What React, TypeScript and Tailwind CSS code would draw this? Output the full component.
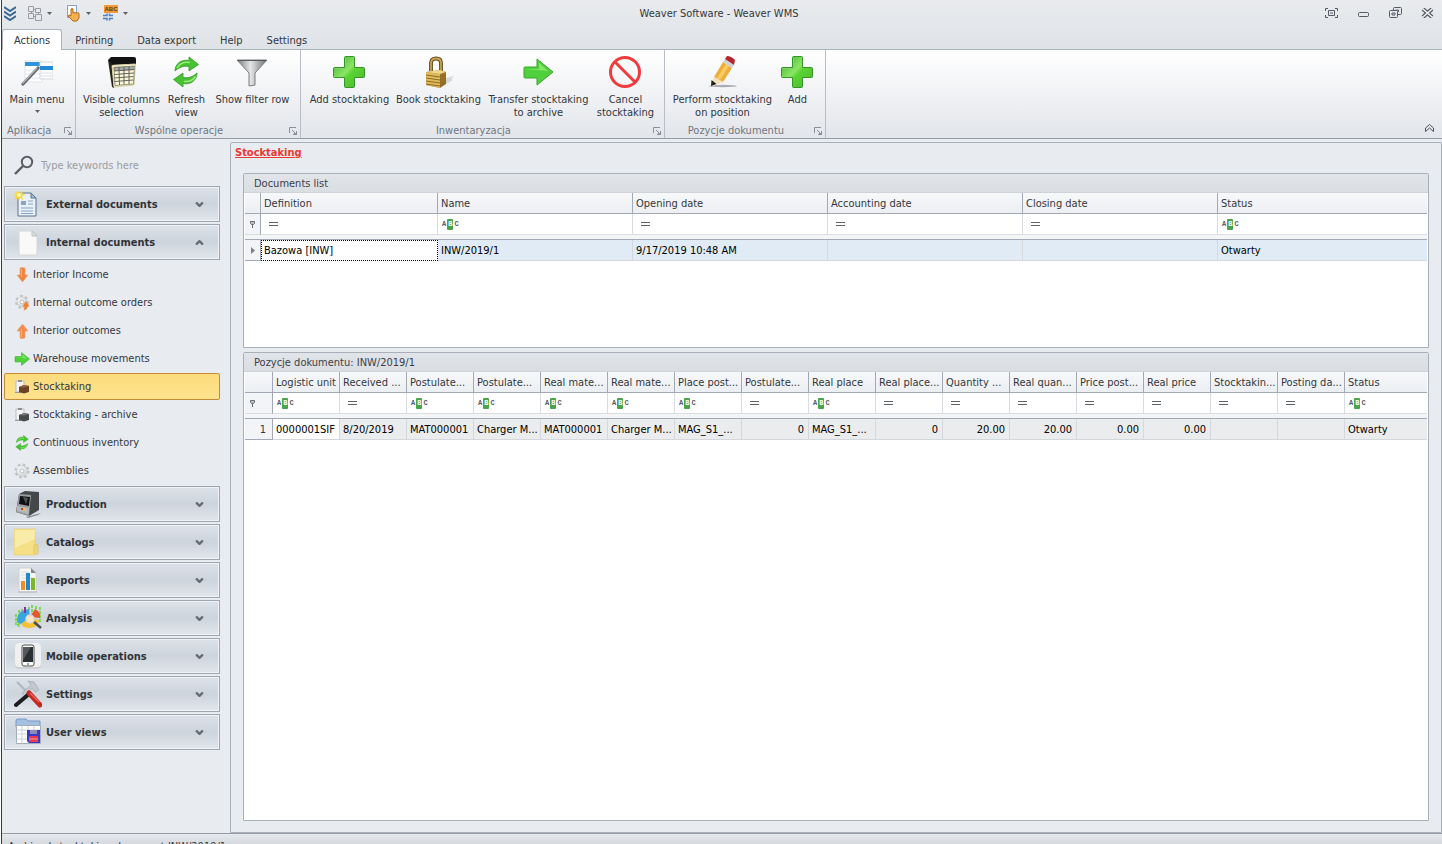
// Weaver WMS - stocktaking screen
import { useState, type ReactNode } from 'react';
import { ChevronDown, ChevronUp } from 'lucide-react';

interface RibbonAction {
    label: string[];
    width: string;
    icon: ReactNode;
    menu?: boolean;
}

interface RibbonGroupData {
    name: string;
    padding: string;
    actions: RibbonAction[];
}

interface Column {
    title: string;
    filter: 'abc' | 'eq';
    width?: string;
    right?: boolean;
}

/* ---------- Ribbon icons ---------- */

const MainMenuIcon = () => (
    <svg width="32" height="32" viewBox="0 0 32 32">
        <path d="M4 5h17v21H4z" fill="#fff" stroke="#dfe2e6" />
        <path d="M4 14h16M4 18h16M4 22h16" stroke="#e3e6ea" />
        <path d="M4 6h17v4H4z" fill="#2f93dc" />
        <path d="M19 6h13v17H19z" fill="#fbfcfd" stroke="#d5d9de" />
        <path d="M19 17h12M19 20h12" stroke="#dfe2e6" />
        <path d="M19 10h13v4H19z" fill="#2589d6" />
        <path d="M2 28 17 12" stroke="#63676c" strokeWidth="3.2" strokeLinecap="round" />
        <path d="M2 27 16 12" stroke="#b7bbbf" strokeWidth="1.2" strokeLinecap="round" />
    </svg>
);

const ColumnsIcon = () => (
    <svg width="32" height="32" viewBox="0 0 32 32">
        <path d="m3 4 3-3h23q2 0 2 2v5L6 9z" fill="#121212" />
        <path d="M3 4l4 4 2 24-2-1z" fill="#26261f" />
        <path d="M7 9.500 30.500 8l-1.500 21L9 31z" fill="#fbf8da" stroke="#d8d09a" />
        <path d="m8.500 11 20.500-1v4L9 15z" fill="#a9aaa7" />
        <path d="m9 15 20-1.500M9 18.500l20-1.500M9.500 22l19-1.500M9.500 25.500l19-1.500M14 11l.5 18M19 11v17.500M24 10.500V28" stroke="#55564e" strokeWidth=".9" fill="none" />
        <path d="M9 11.500 10 29.500l18.500-1.500L29.500 10z" stroke="#6a6a5c" strokeWidth=".7" fill="none" />
    </svg>
);

const RefreshIcon = ({ size = 32 }: { size?: number }) => (
    <svg width={size} height={size} viewBox="0 0 32 32">
        <path d="M5 15C5 8 11 3 19 4.500V1l9.500 7.500L19 15v-4.500c-6-1-10 1-14 4.500z" fill="#47c231" stroke="#36982a" strokeWidth=".8" />
        <path d="M27 17c0 7-6 12-14 10.500V31l-9.500-7.500L13 17v4.500c6 1 10-1 14-4.500z" fill="#47c231" stroke="#36982a" strokeWidth=".8" />
        <path d="M7 12c3-5 8-6.500 13-5.500M14 25.500c5 .5 9-1 11.500-5" fill="none" stroke="#9cec7d" strokeWidth="1.500" />
    </svg>
);

const FunnelIcon = () => (
    <svg width="32" height="32" viewBox="0 0 32 32">
        <defs>
            <linearGradient id="funnel" x1="0" x2="1">
                <stop offset="0" stopColor="#777b7c" />
                <stop offset=".45" stopColor="#e4e6e6" />
                <stop offset="1" stopColor="#6c7072" />
            </linearGradient>
        </defs>
        <path d="M1 4h30L19 17v12l-6 1V17z" fill="url(#funnel)" stroke="#7b7f81" />
        <path d="M2 4.500h28" stroke="#565a5c" />
    </svg>
);

const PlusIcon = () => (
    <svg width="32" height="32" viewBox="0 0 32 32">
        <defs>
            <linearGradient id="plus" x1="0" y1="0" x2="1" y2="1">
                <stop offset="0" stopColor="#3fae2a" />
                <stop offset=".45" stopColor="#8be566" />
                <stop offset=".55" stopColor="#58d433" />
                <stop offset="1" stopColor="#4bb532" />
            </linearGradient>
        </defs>
        <path
            d="M11.500 1.500q0-1 1-1h8q1 0 1 1v10h9q1 0 1 1v8q0 1-1 1h-9v9q0 1-1 1h-8q-1 0-1-1v-9h-10q-1 0-1-1v-8q0-1 1-1h10z"
            fill="url(#plus)"
            stroke="#35932a"
        />
        <path d="M12.500 2v10.500H2" fill="none" stroke="#7fd767" />
    </svg>
);

const LockIcon = () => (
    <svg width="32" height="32" viewBox="0 0 32 32">
        <path d="m24 22 8-2-3 3 2 1-7 4z" fill="#d4d7da" />
        <path d="M9 15V7q0-4.500 5-4.500T19 7v8" fill="none" stroke="#5e4718" strokeWidth="3.800" />
        <path d="M9 15V7q0-4.500 5-4.500T19 7v8" fill="none" stroke="#cba453" strokeWidth="1.800" />
        <path d="m4 16 14-2 6 2v12l-6 4-14-3z" fill="#9b7126" />
        <path d="m4 16 14 2v14L4 29z" fill="#e0ba5c" />
        <path d="m4 19 14 2 6-2M4 22l14 2 6-2M4 25l14 2 6-2M4 28l14 2 6-3" fill="none" stroke="#8d6c25" />
        <path d="m4 16 14-2 6 2-6 2z" fill="#f0d78b" />
    </svg>
);

const ArrowIcon = ({ size = 32 }: { size?: number }) => (
    <svg width={size} height={size} viewBox="0 0 32 32">
        <path d="M2 12q0-1 1-1h12V3l16 13-16 13v-7H3q-1 0-1-1z" fill="#50d03c" stroke="#38a52c" />
        <path d="M4 13h13V7l9 8z" fill="#7ee864" />
    </svg>
);

const CancelIcon = () => (
    <svg width="32" height="32" viewBox="0 0 32 32">
        <circle cx="16" cy="16" r="14.500" fill="none" stroke="#ef3b3b" strokeWidth="3" />
        <path d="m6 6 20 20" stroke="#ef3b3b" strokeWidth="3" />
    </svg>
);

const PencilIcon = () => (
    <svg width="32" height="32" viewBox="0 0 32 32">
        <ellipse cx="17" cy="30" rx="14" ry="1.200" fill="#a9adb2" />
        <path d="M8 21 17 6l9 6-9 14z" fill="#eeae3a" />
        <path d="M11 22 20 8l3 2-9 14z" fill="#f7cd63" />
        <path d="m17 6 2-3 9 6-2 3z" fill="#cfd2d6" />
        <path d="m19 3 2-3q4 0 8 4l-1 5z" fill="#b3272c" />
        <path d="m8 21 9 5-10 4-2-1z" fill="#f5dfb6" />
        <path d="m5.500 24 5 4-5.500 2z" fill="#20201f" />
    </svg>
);

/* ---------- Navigation icons ---------- */

const Gear = ({ cx, cy, r }: { cx: number; cy: number; r: number }) => (
    <g>
        <circle cx={cx} cy={cy} r={r} fill="none" stroke="#bfc2c5" strokeWidth="3" strokeDasharray="2.400 2.300" />
        <circle cx={cx} cy={cy} r={r - 0.5} fill="#d9dbdd" stroke="#c3c6c9" strokeWidth=".6" />
        <circle cx={cx - 1} cy={cy - 1} r={r - 2} fill="#ebecee" />
        <circle cx={cx} cy={cy} r="2" fill="#f8f9fa" stroke="#adb0b4" strokeWidth=".8" />
    </g>
);

const ArrowDownIcon = () => (
    <svg width="16" height="16" viewBox="0 0 16 16">
        <path d="M6 1q2-1 5 0v7h3l-5.500 7L3 8h3z" fill="#ef8440" stroke="#e9a276" strokeWidth=".6" />
        <path d="M7.500 2v8" stroke="#f9b486" />
    </svg>
);

const ArrowUpIcon = () => (
    <svg width="16" height="16" viewBox="0 0 16 16">
        <path d="M6 15q2 1 5 0V8h3L8.500 1 3 8h3z" fill="#f28a48" stroke="#e9a276" strokeWidth=".6" />
        <path d="M7.500 14V6" stroke="#f9b486" />
    </svg>
);

const OrdersIcon = () => (
    <svg width="16" height="16" viewBox="0 0 16 16">
        <Gear cx={8} cy={7} r={5.5} />
        <path d="M9.500 15.500q1-1 1-4H8.500L12 6l3.500 5.500h-2q0 3-4 4z" fill="#f08033" />
    </svg>
);

const GearIcon = () => (
    <svg width="16" height="16" viewBox="0 0 16 16">
        <Gear cx={8} cy={8} r={6} />
    </svg>
);

const StockIcon = ({ box, top }: { box: string; top: string }) => (
    <svg width="16" height="16" viewBox="0 0 16 16">
        <path d="M2 2h8v11H2z" fill="#f4f4f4" stroke="#b9bcc0" />
        <path d="M4 1h4v2H4z" fill="#8d9196" />
        <path d="M1 13.500h6" stroke="#999" />
        <path d="m5 8 5-2 5 1v6l-5 1.500L5 13z" fill={box} />
        <path d="m5 8 5-2 5 1-5 1.500z" fill={top} />
    </svg>
);

const SearchIcon = () => (
    <svg width="20" height="20" viewBox="0 0 20 20" fill="none" stroke="#5b5f64">
        <circle cx="13" cy="7" r="5.200" strokeWidth="2" />
        <path d="m9 11-8 8" strokeWidth="2.400" />
    </svg>
);

const ExternalDocIcon = () => (
    <svg width="28" height="28" viewBox="0 0 28 28">
        <path d="M4 3h13l5 5v18H4z" fill="#e9f0f8" stroke="#58728f" />
        <path d="M17 3v5h5z" fill="#a8bdd3" stroke="#58728f" />
        <path d="M7 11h5v4H7z" fill="#8aa4c3" />
        <path d="M14 11h5M14 14h5M7 18h12M7 21h12M7 23.500h12" stroke="#8aa4c3" />
        <path d="m5 0 1 3 3-2-1 3 4 1-4 1 1 4-3-2-1 3-1-3-3 2 1-4-3-1 3-1-1-3 3 2z" fill="#f8d936" />
        <circle cx="5" cy="5" r="2" fill="#fff8b0" />
    </svg>
);

const BlankDocIcon = () => (
    <svg width="28" height="28" viewBox="0 0 28 28">
        <path d="M5 3h14l4 5v19H5z" fill="#f8f9f8" stroke="#d5d8d8" />
        <path d="M18 3v5h5z" fill="#dfe2e2" stroke="#bcc0c1" />
    </svg>
);

const ProductionIcon = () => (
    <svg width="28" height="28" viewBox="0 0 28 28">
        <path d="M12 27 27 23l-3 2-10 3z" fill="#85898d" />
        <path d="M5 4 11 1l14 1v18l-10 6-13-4z" fill="#45484b" />
        <path d="m5 4 12 1-2 21-13-4z" fill="#9a9da0" />
        <path d="m6 6 10 1-1 9-10-2z" fill="#101112" />
        <path d="m9 7 5 1-2 6z" fill="#4d5155" />
        <path d="m3 16 12 2-1 6-11-3z" fill="#b6b9bb" />
        <path d="M7 19h2" stroke="#d6362d" strokeWidth="2" />
        <path d="M10 19.500h2" stroke="#f0c431" strokeWidth="2" />
    </svg>
);

const CatalogsIcon = () => (
    <svg width="28" height="28" viewBox="0 0 28 28">
        <path d="M0 2q0-1 1-1h20v26H0z" fill="#f5e088" stroke="#e6cc68" strokeWidth=".6" />
        <path d="M1 2h20v9L1 20z" fill="#faeeb0" opacity=".8" />
        <path d="M20 17q4-2 4 1v8h-4z" fill="#efd573" stroke="#d8bd58" strokeWidth=".6" />
    </svg>
);

const ReportsIcon = () => (
    <svg width="28" height="28" viewBox="0 0 28 28">
        <path d="M5 2h12l5 5v19H5z" fill="#f6f6f5" stroke="#cfd1d2" />
        <path d="M17 2v5h5z" fill="#84888c" />
        <path d="M7 6h8M7 9h10M7 12h12" stroke="#dadcdd" />
        <path d="M7 15h4v9H7z" fill="#f58d22" />
        <path d="M12 7h4v17h-4z" fill="#2786c9" />
        <path d="M17 12h4v12h-4z" fill="#7db52f" />
        <path d="M4 26h19" stroke="#b4b7ba" />
    </svg>
);

const AnalysisIcon = () => (
    <svg width="28" height="28" viewBox="0 0 28 28">
        <path d="M2 10v11M5 6v17M8 5v4M18 1v9M22 2v9M26 3v16M4 16v6M15 3v4" stroke="#66d43c" strokeWidth="1.500" strokeDasharray="3 1" />
        <path d="M3 15q1-9 12-10l1 9-9 6q-4-1-4-5z" fill="#3aa4dc" />
        <path d="m16 13 5-8q6 3 5 9z" fill="#e4582b" />
        <path d="m7 20 8-6 10 2q0 7-9 8-7 0-9-4z" fill="#f2c136" />
        <path d="M11 3v6" stroke="#8b2fa5" strokeWidth="2" />
        <circle cx="16" cy="15" r="4" fill="#fbe4c0" stroke="#d8dadc" strokeWidth="1.500" />
        <path d="m20 18 7 6" stroke="#4b4f54" strokeWidth="2.500" />
    </svg>
);

const MobileIcon = () => (
    <svg width="28" height="28" viewBox="0 0 28 28">
        <rect x="1" y="1" width="26" height="26" rx="4" fill="#cfd1d3" />
        <rect x="1" y="1" width="26" height="24" rx="4" fill="#f0f0f0" />
        <rect x="8" y="3" width="12" height="21" rx="2" fill="#f9f9f9" stroke="#4c4f52" />
        <path d="M9 5h10v15H9z" fill="#2b2e31" />
        <path d="M9 5h8L9 18z" fill="#55595e" />
        <circle cx="14" cy="22" r="1" fill="#888" />
    </svg>
);

const ToolsIcon = () => (
    <svg width="28" height="28" viewBox="0 0 28 28">
        <path d="m3 2 13 13" stroke="#aeb6bd" strokeWidth="2" />
        <path d="m14 1 6 1 5 8-4 2-3-4-7 8-3-3 9-8z" fill="#c2c9cf" stroke="#98a1a9" strokeWidth=".6" />
        <path d="M2 25 15 14" stroke="#1c1d1f" strokeWidth="4" strokeLinecap="round" />
        <path d="m15 13 11 12" stroke="#c8281f" strokeWidth="5" strokeLinecap="round" />
        <path d="m16 13 9 9" stroke="#ee6a5c" strokeWidth="1.200" />
    </svg>
);

const UserViewsIcon = () => (
    <svg width="28" height="28" viewBox="0 0 28 28">
        <path d="M2 3q0-2 2-2h8l2 2h12v6H2z" fill="#a6c0e4" stroke="#7898c4" />
        <path d="M2.500 7.500h24v18h-24z" fill="#fff" stroke="#a5adb9" />
        <path d="M3 12h23M3 16h23M3 21h23M8 8v17M14 8v17M20 8v17" stroke="#ccd2db" />
        <path d="M13 12h13v13H15l-2-2z" fill="#3a39c8" />
        <path d="M16 12h7v4h-7z" fill="#8c8fb4" />
        <path d="M15 18h9v6h-9z" fill="#e9394a" />
        <path d="M15 21h9" stroke="#f3a0a8" />
    </svg>
);

/* ---------- Data ---------- */

const tabs = ['Actions', 'Printing', 'Data export', 'Help', 'Settings'];

const ribbon: RibbonGroupData[] = [
    {
        name: 'Aplikacja',
        padding: 'pl-[3px] pr-[6px]',
        actions: [{ label: ['Main menu'], width: 'w-16', icon: <MainMenuIcon />, menu: true }],
    },
    {
        name: 'Wspólne operacje',
        padding: 'pl-[6px] pr-2',
        actions: [
            { label: ['Visible columns', 'selection'], width: 'w-[78px]', icon: <ColumnsIcon /> },
            { label: ['Refresh', 'view'], width: 'w-[52px]', icon: <RefreshIcon /> },
            { label: ['Show filter row'], width: 'w-20', icon: <FunnelIcon /> },
        ],
    },
    {
        name: 'Inwentaryzacja',
        padding: 'pl-[6px] pr-[5px]',
        actions: [
            { label: ['Add stocktaking'], width: 'w-[84px]', icon: <PlusIcon /> },
            { label: ['Book stocktaking'], width: 'w-[94px]', icon: <LockIcon /> },
            { label: ['Transfer stocktaking', 'to archive'], width: 'w-[106px]', icon: <ArrowIcon /> },
            { label: ['Cancel', 'stocktaking'], width: 'w-[68px]', icon: <CancelIcon /> },
        ],
    },
    {
        name: 'Pozycje dokumentu',
        padding: 'pl-[6px] pr-1',
        actions: [
            { label: ['Perform stocktaking', 'on position'], width: 'w-[102px]', icon: <PencilIcon /> },
            { label: ['Add'], width: 'w-12', icon: <PlusIcon /> },
        ],
    },
];

const internalItems = [
    { name: 'Interior Income', icon: <ArrowDownIcon /> },
    { name: 'Internal outcome orders', icon: <OrdersIcon /> },
    { name: 'Interior outcomes', icon: <ArrowUpIcon /> },
    { name: 'Warehouse movements', icon: <ArrowIcon size={16} /> },
    { name: 'Stocktaking', icon: <StockIcon box="#6b4424" top="#96683f" /> },
    { name: 'Stocktaking - archive', icon: <StockIcon box="#47494c" top="#77797c" /> },
    { name: 'Continuous inventory', icon: <RefreshIcon size={16} /> },
    { name: 'Assemblies', icon: <GearIcon /> },
];

const sections = [
    { name: 'External documents', icon: <ExternalDocIcon /> },
    { name: 'Internal documents', icon: <BlankDocIcon /> },
    { name: 'Production', icon: <ProductionIcon /> },
    { name: 'Catalogs', icon: <CatalogsIcon /> },
    { name: 'Reports', icon: <ReportsIcon /> },
    { name: 'Analysis', icon: <AnalysisIcon /> },
    { name: 'Mobile operations', icon: <MobileIcon /> },
    { name: 'Settings', icon: <ToolsIcon /> },
    { name: 'User views', icon: <UserViewsIcon /> },
];

const documentColumns: Column[] = [
    { title: 'Definition', filter: 'eq', width: 'w-[177px]' },
    { title: 'Name', filter: 'abc', width: 'w-[195px]' },
    { title: 'Opening date', filter: 'eq', width: 'w-[195px]' },
    { title: 'Accounting date', filter: 'eq', width: 'w-[195px]' },
    { title: 'Closing date', filter: 'eq', width: 'w-[195px]' },
    { title: 'Status', filter: 'abc' },
];

const documentRow = ['Bazowa [INW]', 'INW/2019/1', '9/17/2019 10:48 AM', '', '', 'Otwarty'];

const positionColumns: Column[] = [
    { title: 'Logistic unit', filter: 'abc', width: 'w-[67px]' },
    { title: 'Received ...', filter: 'eq', width: 'w-[67px]' },
    { title: 'Postulate...', filter: 'abc', width: 'w-[67px]' },
    { title: 'Postulate...', filter: 'abc', width: 'w-[67px]' },
    { title: 'Real mate...', filter: 'abc', width: 'w-[67px]' },
    { title: 'Real mate...', filter: 'abc', width: 'w-[67px]' },
    { title: 'Place post...', filter: 'abc', width: 'w-[67px]' },
    { title: 'Postulate...', filter: 'eq', width: 'w-[67px]', right: true },
    { title: 'Real place', filter: 'abc', width: 'w-[67px]' },
    { title: 'Real place...', filter: 'eq', width: 'w-[67px]', right: true },
    { title: 'Quantity ...', filter: 'eq', width: 'w-[67px]', right: true },
    { title: 'Real quan...', filter: 'eq', width: 'w-[67px]', right: true },
    { title: 'Price post...', filter: 'eq', width: 'w-[67px]', right: true },
    { title: 'Real price', filter: 'eq', width: 'w-[67px]', right: true },
    { title: 'Stocktakin...', filter: 'eq', width: 'w-[67px]' },
    { title: 'Posting da...', filter: 'eq', width: 'w-[67px]' },
    { title: 'Status', filter: 'abc' },
];

const positionRow = [
    '0000001SIF', '8/20/2019', 'MAT000001', 'Charger M...', 'MAT000001', 'Charger M...', 'MAG_S1_...', '0',
    'MAG_S1_...', '0', '20.00', '20.00', '0.00', '0.00', '', '', 'Otwarty',
];

/* ---------- Small parts ---------- */

const Caret = () => (
    <svg width="5" height="3" viewBox="0 0 5 3" className="shrink-0">
        <path d="M0 0h5L2.500 3z" fill="#5d6269" />
    </svg>
);

const FilterMark = ({ kind }: { kind: 'abc' | 'eq' }) =>
    kind === 'eq' ? (
        <span className="ml-1 block h-1 w-[9px] border-y border-[#5d6168]" />
    ) : (
        <span className="flex items-center gap-px font-['Liberation_Mono',monospace] text-[7px] leading-[11px] font-bold text-[#55595f]">
            <span>A</span>
            <span className="rounded-[1px] bg-[#4aa54a] px-px text-white">B</span>
            <span>C</span>
        </span>
    );

const WindowButtons = () => (
    <div className="flex items-center gap-[19px]">
        <button aria-label="Full screen">
            <svg width="13" height="10" viewBox="0 0 13 10" fill="none" stroke="#565b63">
                <path d="M.5 3V.5H3M10 .5h2.500V3M12.500 7v2.500H10M3 9.500H.5V7M3.500 2.500h6v5h-6zM5 5h3" />
            </svg>
        </button>
        <button aria-label="Minimize">
            <svg width="13" height="10" viewBox="0 0 13 10" fill="none" stroke="#565b63">
                <rect x="1.500" y="4.500" width="10" height="4" rx="1" />
            </svg>
        </button>
        <button aria-label="Restore">
            <svg width="13" height="12" viewBox="0 0 13 12" fill="none" stroke="#565b63">
                <path d="M4.500 3V1.500q0-1 1-1h6q1 0 1 1v5q0 1-1 1H9" />
                <rect x=".5" y="3.500" width="8" height="7" rx="1" />
                <path d="M3 6h3v2H3zM6.500 3h3v2" />
            </svg>
        </button>
        <button aria-label="Close">
            <svg width="13" height="10" viewBox="0 0 13 10">
                <path d="m2 1 9 8M11 1 2 9" stroke="#565b63" strokeWidth="4" />
                <path d="m2 1 9 8M11 1 2 9" stroke="#f3f4f6" strokeWidth="1.600" />
            </svg>
        </button>
    </div>
);

const QuickAccess = () => (
    <div className="flex flex-1 items-center">
        <button aria-label="Application menu" className="mr-3">
            <svg width="12" height="15" viewBox="0 0 12 15" fill="none" stroke="#3c6894" strokeWidth="2">
                <path d="m0 1 6 4 6-4M0 5.500l6 4 6-4M0 10l6 4 6-4" />
            </svg>
        </button>
        <button aria-label="Layout" className="mr-[14px] flex items-center gap-1">
            <svg width="15" height="15" viewBox="0 0 15 15" fill="none" stroke="#989ca2">
                <path d="M.5.500h5v5h-5zM7.500 2.500h5v4h-5zM.5 7.500h5v5h-5zM7.500 8.500h6v6h-6zM3.500 5.500v2M5.500 3.500h2M10.500 6.500v2M5.500 10.500h2" />
            </svg>
            <Caret />
        </button>
        <button aria-label="Touch mode" className="mr-[9px] flex items-center gap-[5px]">
            <svg width="15" height="17" viewBox="0 0 15 17">
                <path d="M1.500.500h9v12h-9z" fill="#fff" stroke="#8a9fc4" />
                <path d="M5 11V4q1-1 2 0v4q1-1 2 0 1-1 2 0 1-1 2 .5V13l-2 3H7l-5-5q1-2 3 0z" fill="#f4b04e" stroke="#b3681c" />
            </svg>
            <Caret />
        </button>
        <button aria-label="Captions" className="flex items-center gap-[5px]">
            <svg width="18" height="17" viewBox="0 0 18 17">
                <path d="M4 0h14v8H4z" fill="#f29a3b" />
                <text x="11" y="6" textAnchor="middle" fontSize="6" fontWeight="bold" fontFamily="Liberation Sans" fill="#5d3c12">ABC</text>
                <path d="M3 10.500h4V8.500M3 13.500h4v2M13 10.500H9.500V8.500M13 13.500H9.500v2" fill="none" stroke="#4e7fc7" strokeWidth="1.500" />
            </svg>
            <Caret />
        </button>
    </div>
);

const DialogLauncher = ({ name }: { name: string }) => (
    <button aria-label={`${name} options`} className="absolute right-[3px] bottom-[3px]">
        <svg width="8" height="8" viewBox="0 0 8 8" fill="none" stroke="#8b9098">
            <path d="M.5 6V.5H7M3 3l3 3" />
            <path d="M4 7.500h4M7.500 4v4M5 6.500h2" />
        </svg>
    </button>
);

const RibbonGroup = ({ group }: { group: RibbonGroupData }) => (
    <section className="relative flex flex-col border-r border-[#b9bec6]">
        <div className={`flex flex-1 ${group.padding}`}>
            {group.actions.map((action) => (
                <button key={action.label[0]} className={`flex flex-col items-center pt-[6px] ${action.width}`}>
                    {action.icon}
                    <span className="mt-[5px] whitespace-nowrap">
                        {action.label.map((line) => (
                            <span key={line} className="block">{line}</span>
                        ))}
                    </span>
                    {action.menu && (
                        <span className="mt-1">
                            <Caret />
                        </span>
                    )}
                </button>
            ))}
        </div>
        <h2 className="pr-6 pl-[5px] text-center leading-[15px] text-[#6f7782]">{group.name}</h2>
        <DialogLauncher name={group.name} />
    </section>
);

interface GridProps {
    label: string;
    columns: Column[];
    row: string[];
    indicator: ReactNode;
    indicatorWidth: string;
    rowColor: string;
    firstCell: string;
}

const Grid = ({ label, columns, row, indicator, indicatorWidth, rowColor, firstCell }: GridProps) => (
    <table aria-label={label} className="w-full table-fixed border-separate border-spacing-0 whitespace-nowrap">
        <colgroup>
            <col className={indicatorWidth} />
            {columns.map((column, index) => (
                <col key={index} className={column.width} />
            ))}
        </colgroup>
        <thead>
            <tr className="h-[21px] bg-linear-to-b from-[#f7f8fa] to-[#ebeef2] text-left text-[#33373d]">
                <th className="border-r border-b border-[#a2a9b5]" />
                {columns.map((column, index) => (
                    <th key={index} className="overflow-hidden border-r border-b border-[#a2a9b5] px-[3px] font-normal last:border-r-0">
                        {column.title}
                    </th>
                ))}
            </tr>
            <tr className="h-[21px] bg-white">
                <td className="border-r border-b border-[#d9dce1] border-r-[#a2a9b5] bg-[#f2f4f7]">
                    <svg width="5" height="7" viewBox="0 0 5 7" className="ml-[5px]">
                        <path d="M.5.500h4v2l-1 1h-2l-1-1zM2.500 3v4" fill="#b9bcc1" stroke="#6b6f75" />
                    </svg>
                </td>
                {columns.map((column, index) => (
                    <td key={index} className="border-r border-b border-[#d9dce1] px-1 last:border-r-0">
                        <FilterMark kind={column.filter} />
                    </td>
                ))}
            </tr>
        </thead>
        <tbody>
            <tr className="h-[5px]">
                <td colSpan={columns.length + 1} className="border-b border-[#a2a9b5] bg-[#f4f5f7]" />
            </tr>
            <tr className={`h-[21px] text-black ${rowColor}`}>
                <td className="border-r border-b border-[#a2a9b5] bg-[#f2f4f7] text-[#33373d]">{indicator}</td>
                {row.map((value, index) => (
                    <td
                        key={index}
                        className={`overflow-hidden last:border-r-0 ${index === 0 ? firstCell : 'border-r border-b border-[#d4d8dd] pr-1 pl-[3px]'} ${columns[index].right ? 'text-right' : ''}`}
                    >
                        {value}
                    </td>
                ))}
            </tr>
        </tbody>
    </table>
);

const GridPanel = ({ title, size, children }: { title: string; size: string; children: ReactNode }) => (
    <section className={`flex flex-col rounded-t-[2px] border border-[#a9b0ba] bg-[#dfe2e7] ${size}`}>
        <h2 className="h-[19px] border-b border-[#cfd3d9] bg-linear-to-b from-[#e1e4e8] to-[#dadde2] pl-[10px] leading-[19px] text-[#3b4048]">
            {title}
        </h2>
        <div className="flex-1 bg-white px-px">{children}</div>
    </section>
);

export default function App() {
    const [activeTab, setActiveTab] = useState('Actions');
    const [openSection, setOpenSection] = useState('Internal documents');
    const [activeItem, setActiveItem] = useState('Stocktaking');

    return (
        <div className="h-screen overflow-hidden bg-white pl-px font-['DejaVu_Sans_Condensed','DejaVu_Sans',sans-serif] text-[11px] leading-[13px] text-[#33373d]">
            <div className="flex h-full flex-col border-l border-[#274150] bg-[#e8ebf0]">
                {/* Title bar and tabs */}
                <header className="bg-linear-to-b from-[#e9ebee] to-[#dfe3e7]">
                    <div className="flex h-[26px] items-center pr-2 pl-[2px]">
                        <QuickAccess />
                        <h1>Weaver Software - Weaver WMS</h1>
                        <div className="flex flex-1 justify-end">
                            <WindowButtons />
                        </div>
                    </div>
                    <nav className="flex border-b border-[#aeb4bd] pt-[3px]">
                        {tabs.map((tab) => (
                            <button
                                key={tab}
                                onClick={() => setActiveTab(tab)}
                                className={`-mb-px h-[21px] rounded-t-[3px] border border-b-0 px-[11px] ${
                                    activeTab === tab ? 'mr-px border-[#aeb4bd] bg-white' : 'border-transparent'
                                }`}
                            >
                                {tab}
                            </button>
                        ))}
                    </nav>
                </header>

                {/* Ribbon */}
                <div className="flex h-[89px] shrink-0 border-b border-[#969ba4] bg-linear-to-b from-white to-[#e2e5ea]">
                    {ribbon.map((group) => (
                        <RibbonGroup key={group.name} group={group} />
                    ))}
                    <button aria-label="Collapse ribbon" className="mt-auto mr-2 mb-[6px] ml-auto">
                        <svg width="9" height="8" viewBox="0 0 9 8" fill="none" stroke="#4c5158">
                            <path d="m.5 4 4-3.500 4 3.500v3.500l-4-3.500-4 3.500z" />
                        </svg>
                    </button>
                </div>

                <div className="flex min-h-0 flex-1 pt-[3px]">
                    {/* Sidebar */}
                    <aside className="w-[228px] shrink-0 pr-[10px] pl-[2px]">
                        <label className="mb-[-2px] flex h-[46px] items-center gap-[7px] pl-[10px]">
                            <SearchIcon />
                            <input
                                type="text"
                                aria-label="Search"
                                placeholder="Type keywords here"
                                className="min-w-0 flex-1 bg-transparent outline-none placeholder:text-[#9a9da1]"
                            />
                        </label>
                        {sections.map((section) => {
                            const open = openSection === section.name;
                            const Chevron = open ? ChevronUp : ChevronDown;
                            return (
                                <div key={section.name} className="mb-[2px]">
                                    <button
                                        onClick={() => setOpenSection(open ? '' : section.name)}
                                        className="flex h-9 w-full items-center border border-[#9fa6b0] bg-linear-to-b from-[#dde2e9] via-[#cdd4dc] to-[#e2e6ec] pr-[14px] pl-[9px] text-left font-bold text-[#2f3338] shadow-[inset_0_0_0_1px_#eef1f5]"
                                    >
                                        {section.icon}
                                        <span className="ml-1 flex-1">{section.name}</span>
                                        <Chevron size={11} strokeWidth={5} className="text-[#666c75]" />
                                    </button>
                                    {open && (
                                        <ul>
                                            {internalItems.map((item) => (
                                                <li key={item.name} className="h-7 pt-px">
                                                    <a
                                                        href="#"
                                                        onClick={() => setActiveItem(item.name)}
                                                        className={`flex h-[27px] items-center gap-[3px] rounded-[2px] border pl-[9px] ${
                                                            activeItem === item.name
                                                                ? 'border-[#c98a35] bg-linear-to-b from-[#fbdc7d] to-[#fee28d]'
                                                                : 'border-transparent'
                                                        }`}
                                                    >
                                                        {item.icon}
                                                        {item.name}
                                                    </a>
                                                </li>
                                            ))}
                                        </ul>
                                    )}
                                </div>
                            );
                        })}
                    </aside>

                    {/* Content */}
                    <main className="flex min-w-0 flex-1 flex-col rounded-tl-[2px] border border-[#a9b0ba] pr-3 pb-[11px]">
                        <a href="#" className="mt-[3px] mb-[14px] ml-1 self-start font-bold text-[#e8392e] underline">
                            Stocktaking
                        </a>
                        <div className="ml-3 flex flex-1 flex-col gap-1">
                            <GridPanel title="Documents list" size="h-[175px]">
                                <Grid
                                    label="Documents list"
                                    columns={documentColumns}
                                    row={documentRow}
                                    indicatorWidth="w-4"
                                    rowColor="bg-[#e1ebf5]"
                                    firstCell="border border-dotted border-black bg-white px-[2px]"
                                    indicator={
                                        <svg width="4" height="7" viewBox="0 0 4 7" className="ml-[6px]">
                                            <path d="M0 0v7l4-3.500z" fill="#7d828a" />
                                        </svg>
                                    }
                                />
                            </GridPanel>
                            <GridPanel title="Pozycje dokumentu: INW/2019/1" size="flex-1">
                                <Grid
                                    label="Pozycje dokumentu"
                                    columns={positionColumns}
                                    row={positionRow}
                                    indicatorWidth="w-7"
                                    rowColor="bg-[#ebecee]"
                                    firstCell="border-r border-b border-[#d4d8dd] bg-white px-[3px]"
                                    indicator={<span className="block pr-[6px] text-right">1</span>}
                                />
                            </GridPanel>
                        </div>
                    </main>
                </div>

                {/* Status bar */}
                <footer className="h-[11px] shrink-0 overflow-hidden border-t border-[#969ba4] bg-linear-to-b from-[#e6e9ed] to-[#d5d8dd] pt-[6px] pl-[6px]">
                    Archived stocktaking document INW/2019/1
                </footer>
            </div>
        </div>
    );
}
